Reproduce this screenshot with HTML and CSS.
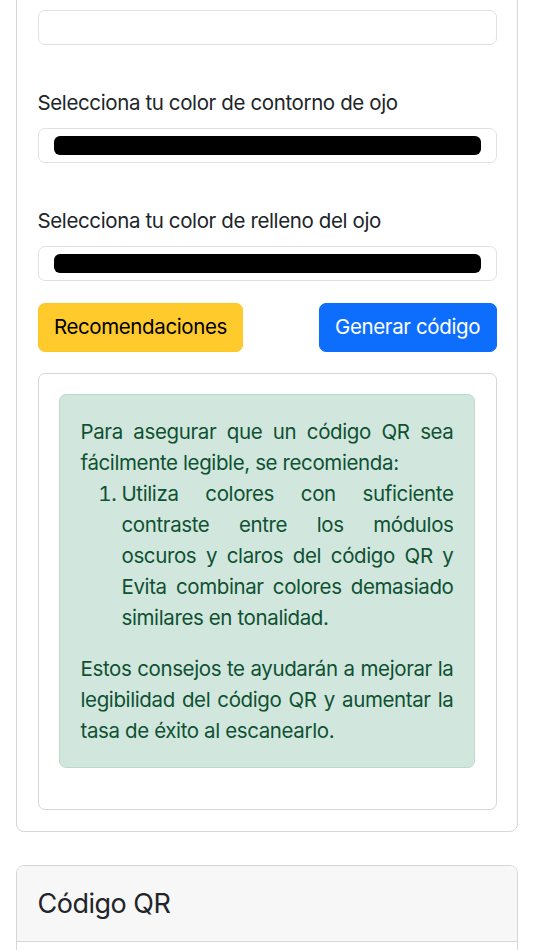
FILE: index.html
```html
<!DOCTYPE html>
<html lang="es">
<head>
<meta charset="utf-8">
<title>Generador de código QR</title>
<link rel="stylesheet" href="styles.css">
</head>
<body>
<div class="page">
  <section class="card">
    <div class="card-body">
      <div class="field">
        <input id="bgColor" class="color-input" type="color" value="#ffffff" aria-label="Selecciona tu color de fondo">
      </div>
      <div class="field">
        <label class="field-label" for="eyeOutline">Selecciona tu color de contorno de ojo</label>
        <input id="eyeOutline" class="color-input" type="color" value="#000000">
      </div>
      <div class="field field-last">
        <label class="field-label" for="eyeFill">Selecciona tu color de relleno del ojo</label>
        <input id="eyeFill" class="color-input" type="color" value="#000000">
      </div>
      <div class="actions">
        <button class="btn btn-warning" type="button">Recomendaciones</button>
        <button class="btn btn-primary" type="button">Generar código</button>
      </div>
      <div class="reco-box">
        <div class="alert">
          <p class="alert-text">Para asegurar que un código QR sea fácilmente legible, se recomienda:</p>
          <ol class="alert-list">
            <li>Utiliza colores con suficiente contraste entre los módulos oscuros y claros del código QR y Evita combinar colores demasiado similares en tonalidad.</li>
          </ol>
          <p class="alert-text">Estos consejos te ayudarán a mejorar la legibilidad del código QR y aumentar la tasa de éxito al escanearlo.</p>
        </div>
      </div>
    </div>
  </section>
  <section class="card card-qr">
    <header class="card-header">
      <h4 class="card-title">Código QR</h4>
    </header>
    <div class="card-body card-body-qr"></div>
  </section>
</div>
</body>
</html>
```
FILE: styles.css
```css
html, body {
  margin: 0;
  padding: 0;
  background: #ffffff;
}

body {
  font-family: Inter, "Liberation Sans", Arial, sans-serif;
  font-size: 20.5px;
  line-height: 1.5;
  letter-spacing: -0.38px;
  color: #212529;
}

*, *::before, *::after {
  box-sizing: border-box;
}

.page {
  margin-top: -11.5px;
  padding: 0 16px;
}

.card {
  border: 1px solid #d6d6d6;
  border-radius: 8px;
  background: #fff;
  overflow: hidden;
}

.card-body {
  padding: 20.5px 20.5px;
}

.field {
  margin-bottom: 41px;
}

.field-last {
  margin-bottom: 22.5px;
}

.field-label {
  display: block;
  padding-top: 2px;
  margin-bottom: 9px;
}

.color-input {
  -webkit-appearance: none;
  appearance: none;
  display: block;
  width: 100%;
  height: 35px;
  margin: 0;
  padding: 7px 15px;
  border: 1px solid #dee2e6;
  border-radius: 7px;
  background: #fff;
  cursor: pointer;
}

.color-input::-webkit-color-swatch-wrapper {
  padding: 0;
}

.color-input::-webkit-color-swatch {
  border: none;
  border-radius: 6px;
}

.actions {
  display: flex;
  justify-content: space-between;
  margin-bottom: 21px;
}

.btn {
  font: inherit;
  line-height: 1.5;
  letter-spacing: inherit;
  padding: 8px 15.4px;
  border: 1px solid transparent;
  border-radius: 7px;
  cursor: pointer;
}

.btn-warning {
  background: #ffca2c;
  border-color: #ffc720;
  color: #000;
}

.btn-primary {
  background: #0d6efd;
  border-color: #0d6efd;
  color: #fff;
}

.reco-box {
  border: 1px solid #d6d6d6;
  border-radius: 7px;
  padding: 20.5px;
}

.alert {
  background: #d1e7dd;
  border: 1px solid #badbcc;
  border-radius: 7px;
  color: #0f5132;
  padding: 20.5px 20.5px 21px;
  margin-bottom: 20.5px;
  line-height: 31px;
  text-align: justify;
}

.alert-text {
  margin: 0;
}

.alert-list {
  margin: 0 0 20.5px;
  padding-left: 41px;
}

.card-qr {
  margin-top: 33px;
}

.card-header {
  background: #f7f7f7;
  border-bottom: 1px solid #d6d6d6;
  padding: 20px 20.5px;
}

.card-title {
  margin: 0;
  font-size: 27px;
  font-weight: 400;
  letter-spacing: -0.5px;
  line-height: 35px;
}

.card-body-qr {
  min-height: 200px;
}
```
